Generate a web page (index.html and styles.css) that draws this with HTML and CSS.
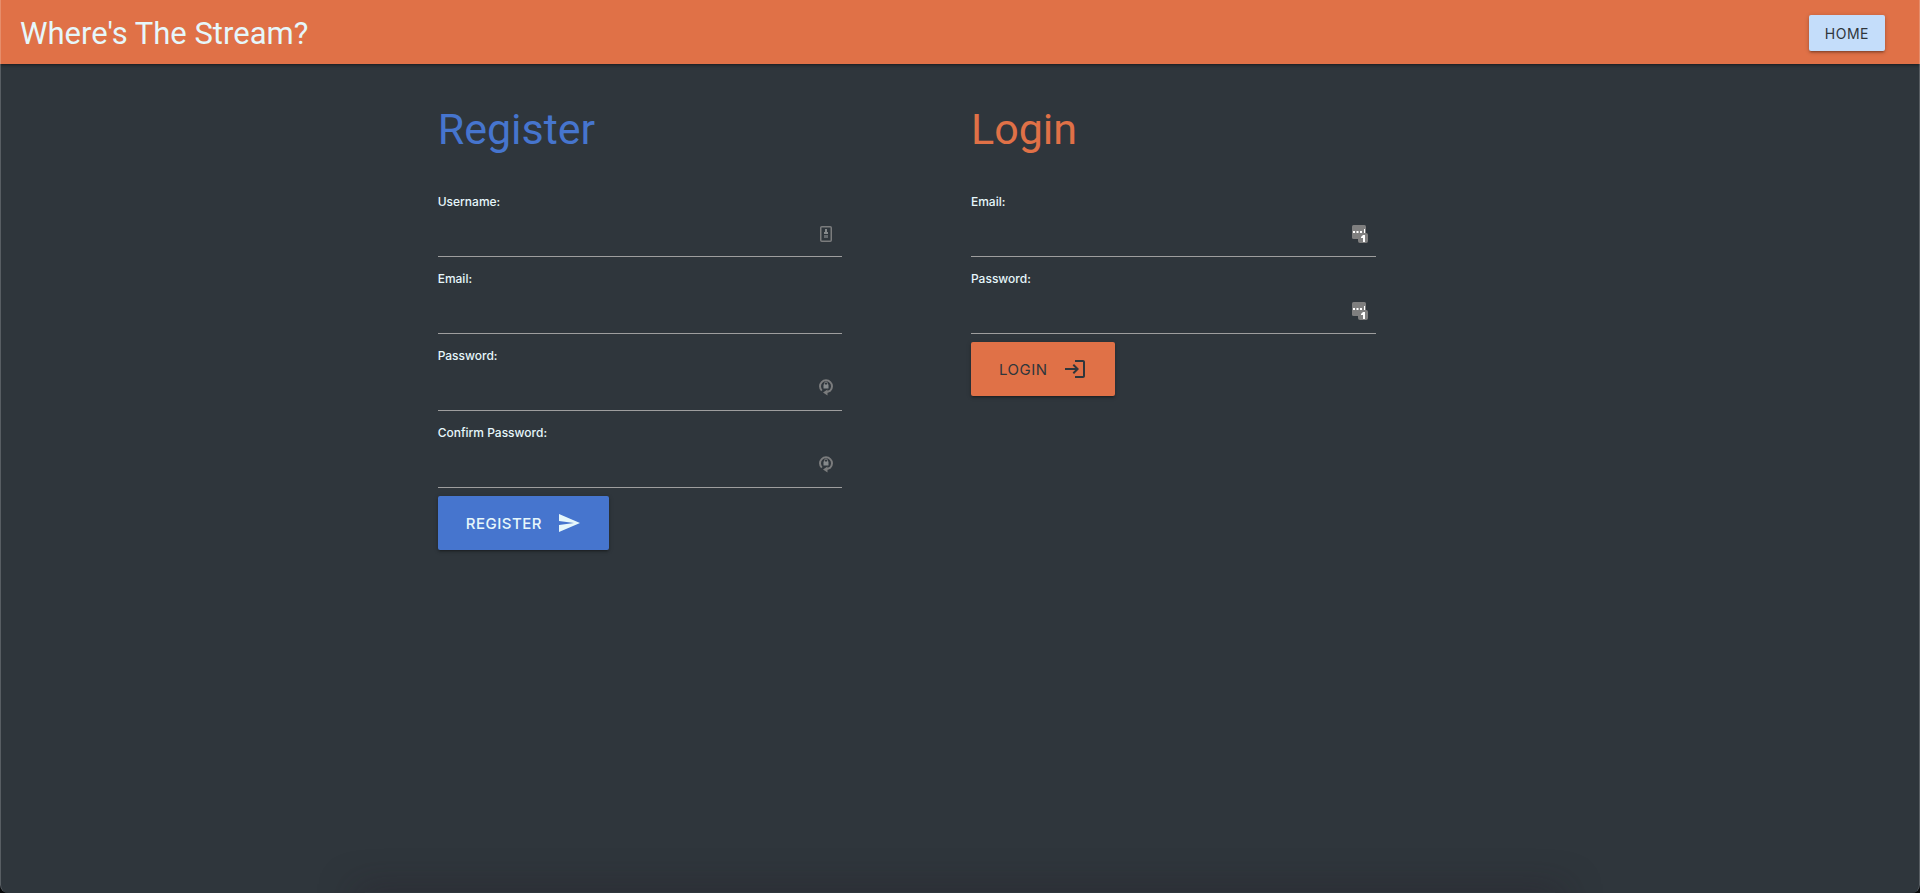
FILE: index.html
```
<!DOCTYPE html>
<html lang="en">
<head>
<meta charset="utf-8">
<meta name="viewport" content="width=device-width, initial-scale=1">
<title>Where's The Stream?</title>
<link rel="stylesheet" href="styles.css">
</head>
<body>
<svg class="sprite" aria-hidden="true">
  <symbol id="icon-id" viewBox="0 0 12 16">
    <rect x="0.75" y="0.75" width="10.5" height="14.5" rx="1" fill="none" stroke="#7b7c7d" stroke-width="1.5"/>
    <path d="M5 3h2v3h1v2H4V6h1z" fill="#85898b"/>
    <path d="M4 9h4v3H4z" fill="#64696d"/>
  </symbol>
  <symbol id="icon-lock" viewBox="0 0 14 18">
    <path d="M2.800 12.600A6 6 0 1 1 11.200 12.600L8 14.200" fill="none" stroke="#7b7c7d" stroke-width="2"/>
    <path d="M8.500 11.500v6l-4.500-3z" fill="#7b7c7d"/>
    <path d="M5.500 7V5.500a1.500 1.500 0 0 1 3 0V7" fill="none" stroke="#7b7c7d"/>
    <rect x="4.500" y="6.500" width="5" height="4" fill="#85898b"/>
  </symbol>
  <symbol id="icon-key" viewBox="0 0 16 18">
    <rect width="14" height="14" rx="1.500" fill="#7f7f7f"/>
    <rect x="6" y="8" width="10" height="10" rx="2" fill="#7f7f7f"/>
    <path d="M1 6h2v2H1zM4.500 6h2v2h-2zM8 6h2v2H8zM12 4h1v4h-1z" fill="#fff"/>
    <path d="M9 12l2-2h2v7h-2v-4H9z" fill="#fff"/>
  </symbol>
</svg>

<header class="navbar">
  <h1 class="brand">Where's The Stream?</h1>
  <a class="btn btn-home" href="#">HOME</a>
</header>

<main class="row">
  <form class="panel">
    <h2 class="heading heading-register">Register</h2>
    <div class="field">
      <label for="reg-username">Username:</label>
      <input id="reg-username" type="text">
      <svg class="hint hint-id" width="12" height="16" aria-hidden="true"><use href="#icon-id"/></svg>
    </div>
    <div class="field">
      <label for="reg-email">Email:</label>
      <input id="reg-email" type="email">
    </div>
    <div class="field">
      <label for="reg-password">Password:</label>
      <input id="reg-password" type="password">
      <svg class="hint" width="14" height="18" aria-hidden="true"><use href="#icon-lock"/></svg>
    </div>
    <div class="field">
      <label for="reg-confirm">Confirm Password:</label>
      <input id="reg-confirm" type="password">
      <svg class="hint" width="14" height="18" aria-hidden="true"><use href="#icon-lock"/></svg>
    </div>
    <button class="btn btn-large btn-register" type="button">REGISTER
      <svg width="24" height="24" viewBox="0 0 24 24" aria-hidden="true"><path fill="currentColor" d="M2.010 21L23 12 2.010 3 2 10l15 2-15 2z"/></svg>
    </button>
  </form>

  <form class="panel">
    <h2 class="heading heading-login">Login</h2>
    <div class="field">
      <label for="login-email">Email:</label>
      <input id="login-email" type="email">
      <svg class="hint hint-key" width="16" height="18" aria-hidden="true"><use href="#icon-key"/></svg>
    </div>
    <div class="field">
      <label for="login-password">Password:</label>
      <input id="login-password" type="password">
      <svg class="hint hint-key" width="16" height="18" aria-hidden="true"><use href="#icon-key"/></svg>
    </div>
    <button class="btn btn-large btn-login" type="button">LOGIN
      <svg width="24" height="24" viewBox="0 0 24 24" aria-hidden="true"><path fill="currentColor" d="M11 7L9.600 8.400l2.600 2.600H2v2h10.200l-2.600 2.600L11 17l5-5-5-5zM20 19h-8v2h8c1.100 0 2-.9 2-2V5c0-1.100-.9-2-2-2h-8v2h8v14z"/></svg>
    </button>
  </form>
</main>
</body>
</html>
```
FILE: styles.css
```
*, *::before, *::after { box-sizing: border-box; }

html { background: #08090b; }

body {
  position: relative;
  display: flex;
  flex-direction: column;
  min-height: 100vh;
  margin: 0;
  overflow: hidden auto;
  background: #2f363c;
  border-radius: 0 0 8px 8px;
  color: #e6f7fb;
  font-family: Inter, "Liberation Sans", sans-serif;
}

/* thin window edge */
body::before {
  content: "";
  position: absolute;
  inset: 0;
  border: solid rgba(255, 255, 255, .2);
  border-width: 0 1px;
  border-radius: 0 0 8px 8px;
  pointer-events: none;
}

/* soft shade along the bottom edge */
body::after {
  content: "";
  align-self: center;
  width: 62%;
  height: 1px;
  margin-top: auto;
  box-shadow: 0 8px 36px 8px rgba(36, 24, 36, .5);
}

.sprite { display: none; }

.navbar {
  display: flex;
  align-items: center;
  justify-content: space-between;
  height: 64px;
  padding: 2px 35px 0 20px;
  background: #e07147;
  box-shadow: 0 2px 2px rgba(0, 0, 0, .14), 0 3px 1px -2px rgba(0, 0, 0, .12), 0 1px 5px rgba(0, 0, 0, .2);
}

.brand {
  margin: 0;
  font-family: Roboto, "Liberation Sans", sans-serif;
  font-size: 31px;
  font-weight: 400;
}

.btn {
  display: inline-flex;
  align-items: center;
  justify-content: center;
  border: 0;
  border-radius: 2px;
  box-shadow: 0 2px 2px rgba(0, 0, 0, .14), 0 3px 1px -2px rgba(0, 0, 0, .12), 0 1px 5px rgba(0, 0, 0, .2);
  font-family: inherit;
  letter-spacing: .5px;
  text-decoration: none;
  cursor: pointer;
}

.btn-home {
  height: 36px;
  padding: 0 16px;
  background: #c4ddfa;
  color: #2f363c;
  font-size: 14px;
}

.btn-large {
  gap: 15px;
  height: 54px;
  padding: 0 28px;
  font-size: 15px;
}

.btn-register { background: #4675ce; color: #e6f7fb; font-weight: 500; }
.btn-login { background: #e07147; color: #2f363c; }

.row {
  display: flex;
  align-items: flex-start;
  width: 66.667%;
  margin: 0 auto;
}

.panel {
  width: 33.333%;
  margin-left: 8.333%;
  padding: 0 11px;
}

.heading {
  margin: 37px 0 32px;
  font-family: Roboto, "Liberation Sans", sans-serif;
  font-size: 43px;
  font-weight: 400;
  line-height: 56px;
}

.heading-register { color: #4675ce; }
.heading-login { color: #e07147; }

.field {
  position: relative;
  margin-bottom: 9px;
}

.field:last-of-type { margin-bottom: 8px; }

.field label {
  display: block;
  font-size: 12px;
  font-weight: 500;
  line-height: 25px;
}

.field input {
  display: block;
  width: 100%;
  height: 43px;
  padding: 0;
  background: transparent;
  border: 0;
  border-bottom: 1px solid #9e9e9e;
  border-radius: 0;
  outline: 0;
  color: inherit;
  font: 16px Inter, sans-serif;
}

.hint {
  position: absolute;
  right: 9px;
  bottom: 15px;
}

.hint-id { right: 10px; }
.hint-key { right: 8px; bottom: 14px; }
```
